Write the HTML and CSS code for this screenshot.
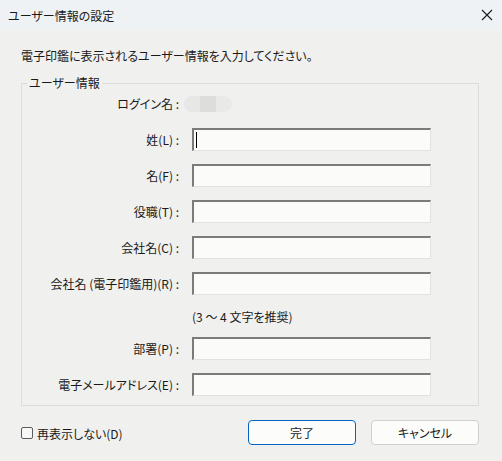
FILE: index.html
```html
<!DOCTYPE html>
<html lang="ja">
<head>
<meta charset="utf-8">
<title>ユーザー情報の設定</title>
<link rel="stylesheet" href="styles.css">
</head>
<body>
<div class="dialog">
  <div class="titlebar">
    <span class="title">ユーザー情報の設定</span>
    <span class="close" aria-label="閉じる">
      <svg width="12" height="12" viewBox="0 0 12 12"><path d="M1 1 L11 11 M11 1 L1 11" stroke="#1a1a1a" stroke-width="1.1" fill="none"/></svg>
    </span>
  </div>
  <div class="content">
    <p class="intro">電子印鑑に表示されるユーザー情報を入力してください。</p>
    <fieldset class="group">
      <legend>ユーザー情報</legend>
      <div class="form">
        <label class="lbl">ログイン名 :</label>
        <div class="login"><span class="b1"></span><span class="b2"></span><span class="b3"></span></div>

        <label class="lbl">姓(L) :</label>
        <div class="field focused"><span class="caret"></span></div>

        <label class="lbl">名(F) :</label>
        <div class="field"></div>

        <label class="lbl">役職(T) :</label>
        <div class="field"></div>

        <label class="lbl">会社名(C) :</label>
        <div class="field"></div>

        <label class="lbl">会社名 (電子印鑑用)(R) :</label>
        <div class="field"></div>

        <span></span>
        <div class="hint">(3 ～ 4 文字を推奨)</div>

        <label class="lbl">部署(P) :</label>
        <div class="field"></div>

        <label class="lbl">電子メールアドレス(E) :</label>
        <div class="field"></div>
      </div>
    </fieldset>
    <div class="footer">
      <label class="check"><span class="box"></span>再表示しない(D)</label>
      <div class="buttons">
        <button class="btn primary">完了</button>
        <button class="btn">キャンセル</button>
      </div>
    </div>
  </div>
</div>
</body>
</html>
```

FILE: styles.css
```css
* { box-sizing: border-box; }
html, body { margin: 0; padding: 0; }
body {
  width: 502px;
  height: 461px;
  background: #f0f0ee;
  font-family: "Noto Sans CJK JP", "Noto Sans", sans-serif;
  font-size: 12px;
  font-feature-settings: "palt";
  color: #1a1a1a;
  overflow: hidden;
}
.dialog {
  width: 502px;
  height: 461px;
  display: flex;
  flex-direction: column;
}
.titlebar {
  height: 30px;
  background: #eef2f5;
  display: flex;
  align-items: center;
  justify-content: space-between;
  padding: 0 9px 0 8px;
  flex: none;
}
.close { display: flex; align-items: center; }
.content {
  padding: 0 23px 0 21px;
  display: flex;
  flex-direction: column;
}
.intro {
  margin: 17px 0 0;
  line-height: 17px;
}
.group {
  margin: 12px 0 0;
  padding: 0 0 9px 0;
  border: 1px solid #dcdcdc;
  border-radius: 0;
  min-width: 0;
}
.group legend {
  margin-left: 5px;
  padding: 0 2px;
  line-height: 14px;
}
.form {
  display: grid;
  grid-template-columns: 158px 239px;
  grid-template-rows: repeat(6, 23px) 16px 23px 23px;
  column-gap: 12px;
  row-gap: 13px;
  margin-top: 2px;
}
.lbl {
  display: flex;
  align-items: center;
  justify-content: flex-end;
  white-space: nowrap;
  padding-right: 1px;
}
.login {
  display: flex;
  align-items: center;
  margin-left: -8px;
}
.login span { display: block; height: 16px; width: 16px; }
.login .b1 { background: #e7e8e6; border-radius: 8px 0 0 8px; }
.login .b2 { background: #dddedc; }
.login .b3 { background: #e9eae8; border-radius: 0 8px 8px 0; }
.field {
  height: 23px;
  background: #fbfcfa;
  border-style: solid;
  border-width: 2px 1px 1px 2px;
  border-color: #7b7b7b #e2e3e1 #e2e3e1 #7b7b7b;
  position: relative;
}
.caret {
  position: absolute;
  left: 2px;
  top: 2px;
  width: 1px;
  height: 16px;
  background: #000;
}
.hint {
  display: flex;
  align-items: center;
}
.footer {
  margin-top: 14px;
  display: flex;
  align-items: center;
  justify-content: space-between;
}
.check {
  display: flex;
  align-items: center;
  gap: 4px;
  margin-top: 1px;
}
.box {
  width: 12px;
  height: 12px;
  border: 1px solid #5c5c5c;
  border-radius: 2px;
  background: #f7f7f7;
}
.buttons {
  display: flex;
  gap: 15px;
}
.btn {
  width: 108px;
  height: 25px;
  font: inherit;
  color: #1a1a1a;
  background: #fcfcfb;
  border: 1px solid #d0d0d0;
  border-radius: 4px;
  padding: 0;
}
.btn.primary {
  border-color: #0067c0;
}
```
